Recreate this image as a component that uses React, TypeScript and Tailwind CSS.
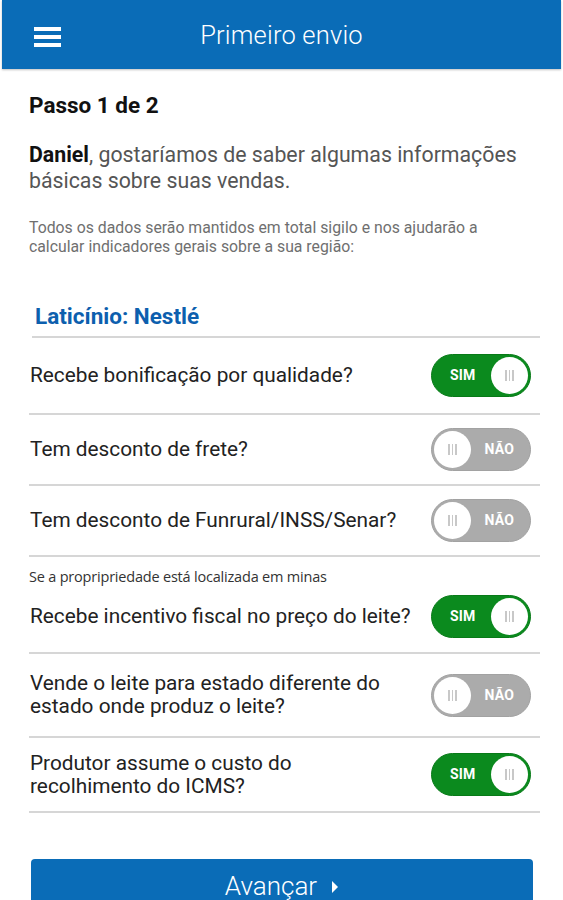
import React from "react";

function Knob() {
  return (
    <div className="w-[37px] h-[37px] rounded-full bg-white flex items-center justify-center gap-[2px]">
      <span className="w-[1.5px] h-[11px] bg-[#c8c8c8]" />
      <span className="w-[1.5px] h-[11px] bg-[#c8c8c8]" />
      <span className="w-[1.5px] h-[11px] bg-[#c8c8c8]" />
    </div>
  );
}

function Toggle({ on }: { on: boolean }) {
  if (on) {
    return (
      <div className="w-[100px] h-[43px] rounded-full bg-[#0b8a1e] border-[1.5px] border-[#087a18] flex items-center justify-between pl-[18px] pr-[2px] shrink-0">
        <span className="text-white font-bold text-[14px] tracking-[0.2px]">SIM</span>
        <Knob />
      </div>
    );
  }
  return (
    <div className="w-[100px] h-[43px] rounded-full bg-[#ababab] border-[1.5px] border-[#a2a2a2] flex items-center justify-between pl-[2px] pr-[16px] shrink-0">
      <Knob />
      <span className="text-white font-bold text-[14px] tracking-[0.2px]">NÃO</span>
    </div>
  );
}

function Row({
  label,
  on,
  h,
  note,
}: {
  label: React.ReactNode;
  on: boolean;
  h: string;
  note?: string;
}) {
  return (
    <div className="border-b-2 border-[#d6d6d6]">
      {note && (
        <div
          className="text-[14.5px] text-[#333] pt-[15px] leading-[9px] h-[23px] tracking-[-0.2px]"
          style={{ fontFamily: '"Open Sans", sans-serif' }}
        >
          {note}
        </div>
      )}
      <div className={`flex items-center justify-between pr-[9px] ${h}`}>
        <div className="text-[20.8px] text-[#222] leading-[23px] pl-[1px]">{label}</div>
        <Toggle on={on} />
      </div>
    </div>
  );
}

export default function App() {
  return (
    <div
      className="w-[563px] h-[900px] bg-white overflow-hidden"
      style={{ fontFamily: 'Roboto, "Liberation Sans", sans-serif' }}
    >
      <div className="mx-[2px] h-[69px] bg-[#0a6cb7] flex items-center relative shadow-[0_1px_2px_rgba(0,0,0,0.25)]">
        <div className="absolute left-[32px] top-[27px] flex flex-col gap-[4px]">
          <span className="w-[27px] h-[4px] bg-white" />
          <span className="w-[27px] h-[4px] bg-white" />
          <span className="w-[27px] h-[4px] bg-white" />
        </div>
        <div className="w-full text-center text-white text-[25.5px] font-light tracking-[0.2px] leading-[30px]">
          Primeiro envio
        </div>
      </div>

      <div className="px-[29px]">
        <div className="pt-[22px] text-[22.5px] font-bold text-[#111] leading-[28px]">Passo 1 de 2</div>
        <div className="pt-[23px] text-[21.3px] text-[#555] leading-[26px]">
          <span className="font-bold text-[#111]">Daniel</span>, gostaríamos de saber algumas informações básicas sobre suas vendas.
        </div>
        <div className="pt-[24px] text-[15.8px] text-[#6f6f6f] leading-[19px] pr-[20px]">
          Todos os dados serão mantidos em total sigilo e nos ajudarão a calcular indicadores gerais sobre a sua região:
        </div>

        <div className="pt-[46px]">
          <div className="border-b-2 border-[#d6d6d6] ml-[3px] mr-[-6px] pb-[6px] text-[22.5px] font-bold text-[#0d5fae] leading-[28px] pl-[3px]">
            Laticínio: Nestlé
          </div>
          <div className="mr-[-6px]">
            <Row h="h-[75px]" on={true} label="Recebe bonificação por qualidade?" />
            <Row h="h-[69px]" on={false} label="Tem desconto de frete?" />
            <Row h="h-[69px]" on={false} label="Tem desconto de Funrural/INSS/Senar?" />
            <Row
              h="h-[72px]"
              on={true}
              note="Se a propripriedade está localizada em minas"
              label="Recebe incentivo fiscal no preço do leite?"
            />
            <Row
              h="h-[82px]"
              on={false}
              label={
                <>
                  Vende o leite para estado diferente do
                  <br />
                  estado onde produz o leite?
                </>
              }
            />
            <Row
              h="h-[73px]"
              on={true}
              label={
                <>
                  Produtor assume o custo do
                  <br />
                  recolhimento do ICMS?
                </>
              }
            />
          </div>
        </div>

        <div className="mt-[46px] ml-[2px] mr-[1px] h-[60px] rounded-[4px] bg-[#0a6cb7] flex items-start justify-center pt-[12px] gap-[14px]">
          <span className="text-white text-[26px] font-light leading-[30px]">Avançar</span>
          <svg width="8" height="12" viewBox="0 0 8 12" className="mt-[10px]">
            <path d="M1 0 L7 6 L1 12 Z" fill="white" />
          </svg>
        </div>
      </div>
    </div>
  );
}
